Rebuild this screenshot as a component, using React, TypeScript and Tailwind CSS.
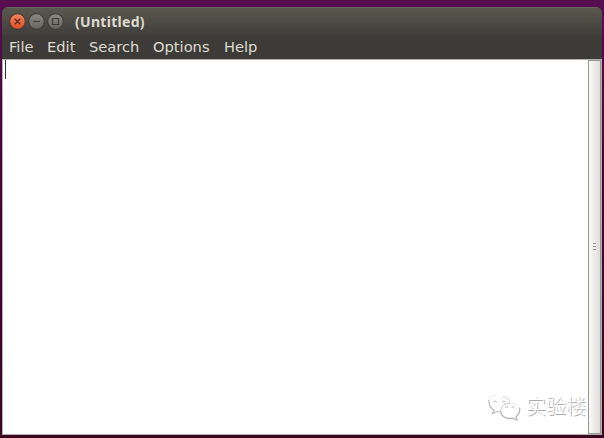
const menus = [
  { label: 'File', width: 'w-[38px]' },
  { label: 'Edit', width: 'w-[42px]' },
  { label: 'Search', width: 'w-[64px]' },
  { label: 'Options', width: 'w-[71px]' },
  { label: 'Help', width: 'w-[48px]' },
];

function WindowButton({ kind }: { kind: 'close' | 'minimize' | 'maximize' }) {
  const close = kind === 'close';
  return (
    <button aria-label={kind} className="h-[17px] w-[17px] shrink-0">
      <svg width="17" height="17" viewBox="0 0 17 17">
        <defs>
          <linearGradient id={kind} x2="0" y2="1">
            <stop stopColor={close ? '#f58362' : '#8b8981'} />
            <stop offset="1" stopColor={close ? '#e34e20' : '#66645d'} />
          </linearGradient>
        </defs>
        <circle cx="8.5" cy="8.5" r="7.8" fill={`url(#${kind})`} stroke="#383732" strokeWidth="1" />
        <g fill="none" stroke={close ? '#57291c' : '#3c3b37'} strokeWidth="1.1">
          {kind === 'close' && <path d="M5.700 5.700l5.600 5.600M11.300 5.700l-5.600 5.600" strokeWidth="1.3" />}
          {kind === 'minimize' && <path d="M5 8.5h7" />}
          {kind === 'maximize' && <path d="M5.5 5.5h6v6h-6z" />}
        </g>
      </svg>
    </button>
  );
}

function Bubbles() {
  return (
    <svg width="34" height="28" viewBox="0 0 34 28" fill="none" aria-hidden="true">
      <path d="M1 6C.5 11 2.500 14 6 16L4.500 19.600L9 17.500L12.500 18" stroke="#b9b9b9" strokeWidth="1.200" />
      <path d="M1 6C2 3.500 4.500 1.500 8 1" stroke="#ededed" />
      <path d="M15 2.500C19 3.500 21.500 5.500 22 8.500" stroke="#d2d2d2" />
      <path d="M31.700 14C32 18 30.500 21 28 22.700L29 26L24.500 24.200C18 25.500 12.800 22 12.600 17.500" stroke="#b7b7b7" strokeWidth="1.300" />
      <path d="M12.600 17.500C12.500 12.500 16.500 9.500 22 9.300" stroke="#c8c8c8" />
      <path d="M22 9.300C27 9.200 30.500 11 31.700 14" stroke="#e5e5e5" />
      <path d="M5.500 8q1.700-2 3.200 0M14 8q1.700-2 3.200 0M17 13.500q1.500-1.700 2.900 0M23.500 13.500q1.500-1.700 2.900 0" stroke="#b3b3b3" />
    </svg>
  );
}

export default function App() {
  return (
    <div className="h-[438px] w-[604px] overflow-hidden bg-[linear-gradient(180deg,#570d50_0%,#490841_25%,#420336_60%,#3b0620_100%)] pt-[7px] pl-[2px]">
      <main className="flex h-[428px] w-[600px] flex-col overflow-hidden rounded-t-[6px] bg-[#3c3b37]">
        <header className="flex h-[29px] shrink-0 items-center border-t border-[#69675d] bg-linear-to-b from-[#5a584e] to-[#3e3d39] pb-[2px] pl-[7px]">
          <div className="flex gap-[2px]">
            <WindowButton kind="close" />
            <WindowButton kind="minimize" />
            <WindowButton kind="maximize" />
          </div>
          <h1 className="ml-[11px] pt-px font-['Noto_Sans',sans-serif] text-[14px] leading-[20px] font-bold tracking-[0.3px] text-[#dfdbd2]">(Untitled)</h1>
        </header>
        <nav className="flex h-[23px] shrink-0 items-center pb-[2px] pl-[7px] font-['DejaVu_Sans',sans-serif] text-[14.67px] leading-[20px] text-[#dfdbd2]">
          {menus.map((menu) => (
            <button key={menu.label} className={`${menu.width} shrink-0 text-left`}>{menu.label}</button>
          ))}
        </nav>
        <div className="flex min-h-0 flex-1 border border-[#b5b2ac] bg-white">
          <section className="relative flex-1">
            <div className="ml-[2px] h-[19px] w-px bg-[#303030]" />
            <div className="absolute right-[2px] bottom-[11px] flex items-center gap-[4px]">
              <Bubbles />
              <span className="pb-[3px] font-['Noto_Sans_CJK_SC',sans-serif] text-[20px] leading-[28px] font-light text-white [text-shadow:1px_1px_0_#aaa]">实验楼</span>
            </div>
          </section>
          <aside className="flex w-[13px] items-center justify-center border border-[#999792] bg-linear-to-r from-[#faf9f8] to-[#dfdedb]">
            <div className="flex flex-col gap-[2px] pb-px">
              <i className="h-px w-[3px] bg-[#999792]" />
              <i className="h-px w-[3px] bg-[#999792]" />
              <i className="h-px w-[3px] bg-[#999792]" />
            </div>
          </aside>
        </div>
      </main>
    </div>
  );
}
